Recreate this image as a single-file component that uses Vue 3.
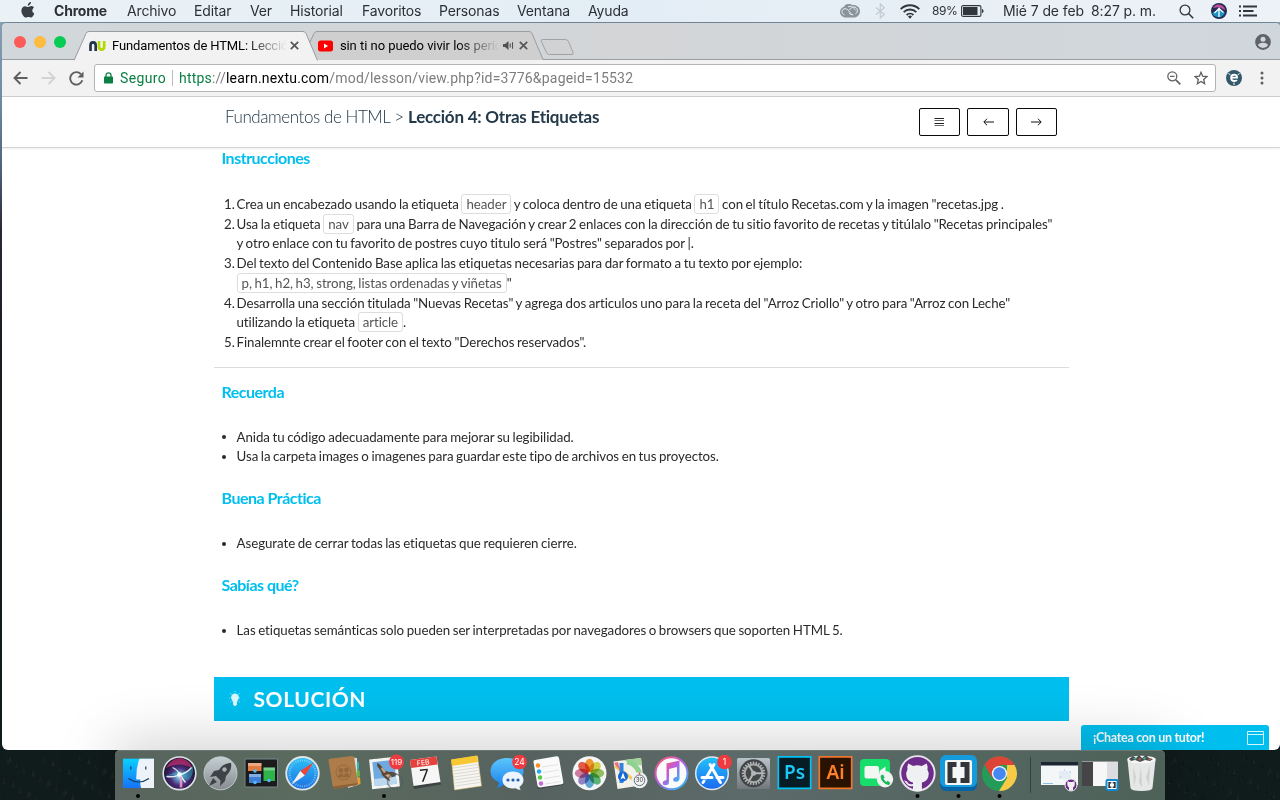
<script setup>
const menus = [
  { label: 'Archivo', cls: 'm1' },
  { label: 'Editar', cls: 'm2' },
  { label: 'Ver', cls: 'm3' },
  { label: 'Historial', cls: 'm4' },
  { label: 'Favoritos', cls: 'm5' },
  { label: 'Personas', cls: 'm6' },
  { label: 'Ventana', cls: 'm7' },
  { label: 'Ayuda', cls: 'm8' },
]
const petals = [
  '#f7941e', '#d9d43b', '#8cc152', '#4fb36b', '#4fa3d8', '#8e7cc3', '#d2739c', '#e8503a',
]
const safariTicks = Array.from({ length: 36 }, (_, i) => i * 10)
const gearTeeth = Array.from({ length: 24 }, (_, i) => i * 15)
const noteLines = [17, 20, 23, 26, 29, 32, 35]
const trees = Array.from({ length: 70 }, (_, i) => {
  const x = (i * 53) % 128
  const y = (i * 31) % 50
  return `M${x} ${y}l-2 8h4z`
})
</script>

<template>
  <div class="screen">
    <header class="menubar">
      <svg class="apple" width="14" height="17" viewBox="0 0 14 17"><path fill="#3a3f45" d="M9.900 0c.1 1-.3 1.900-.9 2.600-.6.700-1.500 1.200-2.300 1.100C6.600 2.800 7 1.900 7.600 1.200 8.200.5 9.200 0 9.900 0zM13 5.800c-1.100.7-1.700 1.500-1.700 2.800 0 1.400.8 2.500 2 3-.5 1.500-1.800 3.900-3.200 3.900-.9 0-1.400-.6-2.600-.6s-1.700.6-2.600.6C3 15.500.4 11.900.4 8.700.4 5.800 2.200 4.200 4.100 4.200c1.200 0 2.200.8 3 .8.7 0 2-.9 3.400-.9 1 0 1.900.6 2.500 1.700z"/></svg>
      <b class="app-name">Chrome</b>
      <span v-for="m in menus" :key="m.label" class="menu" :class="m.cls">{{ m.label }}</span>
      <div class="status">
        <svg class="cc" width="20" height="14" viewBox="0 0 20 14"><path fill="#8b939b" d="M7 0c2-.5 4-.1 5.400 1C16.600.6 20 3 20 7.200c0 3.500-2.800 6.300-6.400 6.300H5.800C2.500 13.500 0 11.100 0 8c0-2.600 1.700-4.700 4-5.300C4.700 1.300 5.700.4 7 0z"/><g fill="none" stroke="#e6edf4" stroke-width="1"><path d="M15.500 9.800c3-1.500 2.500-6.800-1.800-6.800-2 0-3 1.400-4.500 3.200M4.500 10.800c-3.700-1-3.200-6 .7-6.100 1.500 0 2.500.8 3.500 2.100l3.200 4M8 3c3-1.900 6.200.8 7.500 3.300M9 8.800c1 1.500 2.300 2.100 4.300 2"/></g></svg>
        <svg class="bt" width="11" height="16" viewBox="0 0 11 16"><path fill="none" stroke="#c3cad2" stroke-width="1.200" d="M1 4.500l8.300 6.800L5.300 15V1l4 3.700L1 11.500"/></svg>
        <svg class="wifi" width="20" height="15" viewBox="0 0 20 15"><g fill="none" stroke="#30363c" stroke-width="1.900"><path d="M.7 5.100a13.200 13.200 0 0 1 18.600 0M3.700 8.100a9 9 0 0 1 12.600 0M6.600 11a4.900 4.900 0 0 1 6.800 0"/></g><path fill="#30363c" d="M10 14.800l-2-2.200a2.800 2.800 0 0 1 4 0z"/></svg>
        <span class="pct">89%</span>
        <svg class="batt" width="24" height="12" viewBox="0 0 24 12"><rect x=".6" y=".6" width="19.300" height="10.800" rx="1.500" fill="none" stroke="#30363c" stroke-width="1.100"/><path fill="#30363c" d="M2 2h14.500v8H2zM21 4c2 0 2 4 0 4z"/></svg>
        <span class="date">Mié 7 de feb</span>
        <span class="clock">8:27 p. m.</span>
        <svg class="spot" width="15" height="15" viewBox="0 0 15 15"><circle cx="6" cy="6" r="4.900" fill="none" stroke="#30363c" stroke-width="1.300"/><path stroke="#30363c" stroke-width="1.600" d="M9.500 9.500l4.700 4.700"/></svg>
        <svg class="siri-s" width="16" height="16" viewBox="0 0 16 16"><circle cx="8" cy="8" r="8" fill="#232b50"/><path fill="#1b91c4" d="M1 10q5-2 7-5l6 5q-3 5-7 4-4 0-6-4z"/><path fill="#c44da1" d="M2 5q3-5 8-3 4 2 4 5L8 4z"/><path fill="none" stroke="#fff" stroke-width="1.300" d="M8 4.500V14M8 5.500l4.500 4M8 5.500L3.500 10"/></svg>
        <svg class="notif" width="18" height="12" viewBox="0 0 18 12"><path stroke="#30363c" stroke-width="1.900" d="M4 1.500h14M4 6h10.500M4 10.500h14M0 1.500h2M0 6h2M0 10.500h2"/></svg>
      </div>
    </header>

    <main class="window">
      <div class="tabstrip">
        <div class="lights"><i class="red"></i><i class="yellow"></i><i class="green"></i></div>
        <div class="tab active">
          <svg class="shape" width="245" height="30" viewBox="0 0 245 30"><path fill="#f2f2f2" stroke="#999ca0" d="M0 29.500L12 2.500Q12.800.5 15 .5h214q2 0 3 2L243.500 29.500"/><path stroke="#f2f2f2" stroke-width="2" d="M1 30h242"/></svg>
          <div class="tab-row">
            <svg width="17" height="12" viewBox="0 0 17 12"><path fill="none" stroke="#22364c" stroke-width="2.700" d="M1.500 11V5.500q0-3.100 2.600-3.100t2.600 3.100V11"/><path fill="none" stroke="#b4d800" stroke-width="2.700" d="M10 1v5.500q0 3.100 2.600 3.100t2.600-3.100V1"/></svg>
            <span class="tab-title t1">Fundamentos de HTML: Lecció</span>
            <svg class="close" width="9" height="9" viewBox="0 0 9 9"><path stroke="#565656" stroke-width="1.700" d="M.8.8l7.400 7.400M8.200.8L.8 8.200"/></svg>
          </div>
        </div>
        <div class="tab idle">
          <svg class="shape" width="241" height="30" viewBox="0 0 241 30"><path fill="#cfcfcf" stroke="#999ca0" d="M6 13L11 2.500Q12 .5 14 .5h212q2 0 3 2l11.500 27H14z"/></svg>
          <div class="tab-row">
            <svg width="15" height="12" viewBox="0 0 15 12"><rect width="15" height="11" y=".5" rx="2.500" fill="#f00"/><path fill="#fff" d="M6 3.500v5l4-2.500z"/></svg>
            <span class="tab-title t2">sin ti no puedo vivir los peric</span>
            <svg class="sound" width="11" height="9" viewBox="0 0 11 9"><path fill="#505050" d="M0 3h2l3.500-3v9L2 6H0z"/><path fill="none" stroke="#505050" stroke-width="1.100" d="M7.200 2.500v4M9.500 1.200v6.600"/></svg>
            <svg class="close" width="9" height="9" viewBox="0 0 9 9"><path stroke="#565656" stroke-width="1.700" d="M.8.8l7.400 7.400M8.200.8L.8 8.200"/></svg>
          </div>
        </div>
        <svg class="newtab" width="34" height="17" viewBox="0 0 34 17"><path fill="#d0d2d3" stroke="#9fa2a5" d="M2.500.5h23q2 0 3 2l4.500 11q.8 2-1 2H9.500q-2 0-3-2L1.300 2.500Q.5.5 2.500.5z"/></svg>
        <svg class="person" width="16" height="16" viewBox="0 0 16 16"><circle cx="8" cy="8" r="7.900" fill="#5f6368"/><circle cx="8" cy="5.300" r="2.500" fill="#d2d7db"/><path fill="#d2d7db" d="M3 11.300q.5-2.500 5-2.500t5 2.500Q11.500 14 8 14t-5-2.700z"/></svg>
      </div>

      <div class="toolbar">
        <svg width="15" height="14" viewBox="0 0 15 14"><path fill="none" stroke="#5f5f5f" stroke-width="1.900" d="M14.500 7H1.800M7.500 1L1.500 7l6 6"/></svg>
        <svg class="fwd" width="15" height="14" viewBox="0 0 15 14"><path fill="none" stroke="#d3d3d3" stroke-width="1.900" d="M.5 7h12.700M7.500 1l6 6-6 6"/></svg>
        <svg class="reload" width="15" height="15" viewBox="0 0 15 15"><path fill="none" stroke="#5f5f5f" stroke-width="1.900" d="M13.300 9.300A6.200 6.200 0 1 1 12 3.200"/><path fill="#5f5f5f" d="M14.500.5v6h-6z"/></svg>
        <div class="omnibox">
          <svg class="lock" width="9" height="12" viewBox="0 0 9 12"><rect y="4.500" width="9" height="7" rx=".8" fill="#0b8043"/><path fill="none" stroke="#0b8043" stroke-width="1.300" d="M2 5V3.300a2.500 2.500 0 0 1 5 0V5"/></svg>
          <span class="secure">Seguro</span><i class="bar"></i>
          <span class="url"><em>https</em>://<b>learn.nextu.com</b>/mod/lesson/view.php?id=3776&amp;pageid=15532</span>
          <svg class="zoomout" width="14" height="14" viewBox="0 0 14 14"><g fill="none" stroke="#666" stroke-width="1.300"><circle cx="5.300" cy="5.300" r="4.500"/><path d="M3 5.300h4.600"/><path stroke-width="1.800" d="M8.800 8.800l4.500 4.500"/></g></svg>
          <svg width="14" height="14" viewBox="0 0 14 14"><path fill="none" stroke="#5f5f5f" stroke-width="1.300" d="M7 1.300l1.600 3.900 4.300.4-3.200 2.900.9 4.200L7 10.500l-3.600 2.200.9-4.200L1.100 5.600l4.300-.4z"/></svg>
        </div>
        <svg class="ext" width="16" height="16" viewBox="0 0 16 16"><circle cx="8" cy="8" r="8" fill="#33586c"/><path fill="none" stroke="#fff" stroke-width="1.800" d="M5.500 7.700h5.600Q11 4.600 8.200 4.600 5.100 4.700 5.100 7.900q.1 3.100 3.200 3.100 1.600 0 2.700-.9"/><path stroke="#fff" d="M2.500 3.500l2 1.500M13.500 3.500l-2 1.500M8 12.500V15"/></svg>
        <svg class="dots" width="4" height="14" viewBox="0 0 4 14"><g fill="#5f5f5f"><circle cx="2" cy="2" r="1.500"/><circle cx="2" cy="7" r="1.500"/><circle cx="2" cy="12" r="1.500"/></g></svg>
      </div>

      <div class="page">
        <nav class="crumbs">
          <span class="course">Fundamentos de HTML &gt;</span>
          <b class="lesson">Lección 4: Otras Etiquetas</b>
          <div class="buttons">
            <button><svg width="11" height="10" viewBox="0 0 11 10"><path stroke="#222" d="M.5 1.500H10M.5 6.500H10"/><path stroke="#666" d="M.5 3.500H10M.5 8.500H10"/></svg></button>
            <button><svg width="11" height="8" viewBox="0 0 11 8"><path fill="none" stroke="#111" d="M11 4H1M4 .8L.8 4 4 7.200"/></svg></button>
            <button><svg width="11" height="8" viewBox="0 0 11 8"><path fill="none" stroke="#111" d="M0 4h10M7 .8L10.200 4 7 7.200"/></svg></button>
          </div>
        </nav>

        <article class="lesson-body">
          <section class="instructions">
            <h2>Instrucciones</h2>
            <ol>
              <li><i>1.</i><p>Crea un encabezado usando la etiqueta <code>header</code> y coloca dentro de una etiqueta <code>h1</code> con el título Recetas.com y la imagen "recetas.jpg .</p></li>
              <li><i>2.</i><p>Usa la etiqueta <code>nav</code> para una Barra de Navegación y crear 2 enlaces con la dirección de tu sitio favorito de recetas y titúlalo "Recetas principales"<br>y otro enlace con tu favorito de postres cuyo titulo será "Postres" separados por |.</p></li>
              <li><i>3.</i><p>Del texto del Contenido Base aplica las etiquetas necesarias para dar formato a tu texto por ejemplo:<br><code>p, h1, h2, h3, strong, listas ordenadas y viñetas</code>"</p></li>
              <li><i>4.</i><p>Desarrolla una sección titulada "Nuevas Recetas" y agrega dos articulos uno para la receta del "Arroz Criollo" y otro para "Arroz con Leche"<br>utilizando la etiqueta <code>article</code>.</p></li>
              <li><i>5.</i><p>Finalemnte crear el footer con el texto "Derechos reservados".</p></li>
            </ol>
          </section>
          <section class="notes">
            <h2>Recuerda</h2>
            <ul>
              <li>Anida tu código adecuadamente para mejorar su legibilidad.</li>
              <li>Usa la carpeta images o imagenes para guardar este tipo de archivos en tus proyectos.</li>
            </ul>
            <h2>Buena Práctica</h2>
            <ul><li>Asegurate de cerrar todas las etiquetas que requieren cierre.</li></ul>
            <h2>Sabías qué?</h2>
            <ul><li>Las etiquetas semánticas solo pueden ser interpretadas por navegadores o browsers que soporten HTML 5.</li></ul>
          </section>
          <div class="solution">
            <svg width="12" height="16" viewBox="0 0 12 16"><path fill="#d9f7ff" d="M6 2.500a3.900 3.900 0 0 1 3.900 4c0 2-1.600 2.700-1.900 5v2.200L6.500 15h-1L4 13.700v-2.200C3.700 9.200 2.100 8.500 2.100 6.500A3.900 3.900 0 0 1 6 2.500z"/><path stroke="#8ce6fa" stroke-dasharray="1 1" d="M6 0v2M1 2l2 2M11 2L9 4M0 7h2M10 7h2M1 11l2-1M11 11l-2-1"/></svg>
            <strong>SOLUCIÓN</strong>
          </div>
        </article>
      </div>

      <aside class="chat">
        <span>¡Chatea con un tutor!</span>
        <svg width="17" height="14" viewBox="0 0 17 14"><path fill="none" stroke="#d5f5fd" d="M.5.500h16v13H.5zM.5 3.500h16"/></svg>
      </aside>
    </main>

    <footer class="desktop">
      <svg class="forest left" width="128" height="50" viewBox="0 0 128 50"><path v-for="(d, i) in trees" :key="i" :d="d" :fill="i % 2 ? '#232d28' : '#111a18'" opacity=".6"/></svg>
      <div class="dock">
        <svg class="ico" viewBox="0 0 41 50"><defs><linearGradient id="fi" x2="0" y2="1"><stop stop-color="#0ad0ff"/><stop offset="1" stop-color="#1673fa"/></linearGradient></defs><path fill="url(#fi)" d="M5 8.700h31V38H5z"/><path fill="#eef3f9" d="M21.500 8.700H36V38H23q-1-4-.7-8.500h-4Q18 17 21.500 8.700z"/><path fill="none" stroke="#173a58" stroke-width="1.200" d="M12.800 16.500v3M27.800 16.500v3M10.500 28.500q10 7 20.500 0"/><circle class="run" cx="20" cy="46" r="2"/></svg>
        <svg class="ico" viewBox="0 0 41 50"><defs><radialGradient id="si" cy=".6"><stop stop-color="#bff"/><stop offset=".2" stop-color="#5fa5c8"/><stop offset=".55" stop-color="#4d2a78"/><stop offset="1" stop-color="#161530"/></radialGradient></defs><circle cx="20.500" cy="23.300" r="16.300" fill="url(#si)" stroke="#dde2e6" stroke-width="1.600"/><path fill="#e83480" opacity=".6" d="M7 18q5-10 15-10 10 3 11 10-12-7-26 0z"/><path fill="#23c7cb" opacity=".45" d="M6 27q8-5 14-4 10-1 14-8 1 12-6 16-3-6-8-7-7 1-14 3z"/><g fill="none" stroke="#fff" stroke-width="1.300" opacity=".85"><path d="M20.500 24.500q-4 3-13 2M20.500 24.500q7-1 12-7M20.500 24.500q-2-5-7-7M20.500 24.500l6 8"/><path stroke="#fb9ad8" stroke-width="2.500" d="M20.500 24.500q2 5 1.500 13"/></g><circle cx="20.500" cy="24.500" r="2.200" fill="#fff"/></svg>
        <svg class="ico" viewBox="0 0 41 50"><defs><linearGradient id="la" x2="0" y2="1"><stop stop-color="#c5d0d4"/><stop offset="1" stop-color="#868b8e"/></linearGradient></defs><circle cx="20.500" cy="23.300" r="16.500" fill="url(#la)" stroke="#bdc7cb"/><path fill="#3d4246" d="M31 13c-5 0-9 2-12 7l-5 1-4 6 6-1 4.500 4.500L20 36l5-5 1-5c4-4 6-8 5-13z"/><path fill="#3d4246" d="M13 28l-4 8 8-4z"/><circle cx="24.500" cy="19.500" r="2.200" fill="#a9b1b5"/></svg>
        <svg class="ico" viewBox="0 0 41 50"><path fill="#1b1b1c" stroke="#77868a" d="M4 9h32.500v28H4z"/><path fill="#e07b41" d="M7 13h13.500v8H7z"/><path fill="#3d7fd6" d="M8 24h12v9H8z"/><path fill="#2fb44a" d="M22.500 17.500H34V31H22.500z"/><path fill="#fff" opacity=".35" d="M7 13h13.500v3H7zM8 24h12v3H8zM22.500 17.500H34v3H22.500z"/><g fill="#52b6fb"><circle cx="14" cy="21" r="1.800"/><circle cx="14" cy="32.500" r="1.800"/><circle cx="28" cy="30.500" r="1.800"/></g></svg>
        <svg class="ico" viewBox="0 0 41 50"><defs><linearGradient id="sa" x2="0" y2="1"><stop stop-color="#2cc3f7"/><stop offset="1" stop-color="#1c6fe0"/></linearGradient></defs><circle cx="20.500" cy="23.300" r="16.300" fill="url(#sa)" stroke="#dfe4e6" stroke-width="1.800"/><path v-for="a in safariTicks" :key="a" stroke="#b7e2fa" stroke-width=".6" d="M20.500 9.300v2" :transform="`rotate(${a} 20.500 23.300)`"/><path fill="#f34335" d="M31.500 12.500L18.300 21l4.500 4.500z"/><path fill="#f2f2f2" d="M9.500 34.500L18.300 21l4.500 4.500z"/></svg>
        <svg class="ico" viewBox="0 0 41 50"><path fill="#d9dde0" d="M25 7l9 1 1 27-10 3z"/><path fill="#36b5b0" d="M34 12l2 .2v7l-2 .3z"/><path fill="#65b94b" d="M34 20l2.500.2.5 6-3 .5z"/><path fill="#e8a030" d="M34.500 28l2.500-1 .5 7-3 1z"/><path fill="#ad7c49" d="M5.500 10.500Q5 9 7 8.700L29 6q2 0 2.300 2L35 33q0 2-1.500 2.300L13 38.500q-3 .3-3.300-2z"/><path fill="#8d6035" d="M9.700 36.500l25-3.500q0 2-1.500 2.300L13 38.500q-3 .3-3.300-2z"/><circle cx="20.500" cy="22.500" r="7.500" fill="none" stroke="#8b6239" opacity=".7"/><g fill="#8b6239" opacity=".75"><circle cx="18" cy="20.500" r="2.400"/><circle cx="23.500" cy="20" r="2.400"/><path d="M14.500 27.500q1-4 3.500-4t3 4zM21 27.500q0-4.500 2.500-4.500t3.500 4z"/></g></svg>
        <svg class="ico" viewBox="0 0 41 50"><g transform="rotate(-6 20 23)"><path fill="#6ea9e0" stroke="#f4f4f1" stroke-width="3" d="M8 9.500h25v27H8z"/><path fill="none" stroke="#606a68" stroke-dasharray="1 1.500" d="M6 7.500h29v31H6z"/><path fill="#bcd8ee" d="M9.500 28H31.500v7H9.500z"/></g><path fill="#5b4638" d="M13.500 13q4 2 7 7.500l4.500 1.500q3-1 8 2-3 3.500-8 3.500l1 4-4-2.500-4-4q-.5-3.500-3-6.500-3-3-1.500-5.500z"/><path fill="#c5a984" d="M18 17l4 5-2 1-3-4zM21 25l4-1 3 3-3 1.500z"/><circle cx="31" cy="31.500" r="7.500" fill="none" stroke="#505d60" stroke-width="1.500" opacity=".6"/><circle class="badge" cx="32.500" cy="12" r="7.500"/><text class="badge-t" x="32.500" y="14.900">119</text><circle class="run" cx="20" cy="46" r="2"/></svg>
        <svg class="ico" viewBox="0 0 41 50"><path fill="#3d4245" d="M8 34l27-3 1 3.500L9 39z"/><path fill="#f6f6f6" d="M5 10l26.500-3.500 4 25.500L8.500 36z"/><path fill="#e8413c" d="M5 10l26.500-3.500 1 8L6.200 18z"/><text x="18.500" y="15" transform="rotate(-6 18.500 15)" class="mini" fill="#fff" font-size="7">FEB</text><text x="20" y="31.500" transform="rotate(-6 20 31)" class="mini" fill="#222" font-size="17">7</text></svg>
        <svg class="ico" viewBox="0 0 41 50"><path fill="#f7f5f0" stroke="#d6b75d" stroke-width=".5" d="M5.500 10L31.500 6l4 30-27 4z"/><path fill="#f7c831" d="M5 9.500L31 5.500l1 6.500L6 16z"/><path v-for="y in noteLines" :key="y" stroke="#d4d2cd" stroke-width=".8" :d="`M${(y * 0.14 + 4.5).toFixed(1)} ${y + 1}l26-3.800`"/></svg>
        <svg class="ico" viewBox="0 0 41 50"><defs><linearGradient id="me" x2="0" y2="1"><stop stop-color="#5cc6fb"/><stop offset="1" stop-color="#1a80ef"/></linearGradient></defs><path fill="url(#me)" d="M20 8c9.500 0 16.500 5.500 16.500 13S29.500 34.500 20 34.500l-3-.2Q13 38 9 38q3-2 3-5.500Q3.500 28.500 3.500 21C3.500 13.500 10.500 8 20 8z"/><path fill="#edf4fb" d="M26 21.500c6 0 10.500 3.500 10.500 8.500 0 3-1.500 5-4 6.800 0 1 .5 2.300 1.500 3-2 0-4-.7-5-1.600l-3 .3c-6 0-10.500-3.500-10.500-8.500s4.500-8.500 10.500-8.500z"/><g fill="#1f5fae"><circle cx="21" cy="30" r="1.600"/><circle cx="26" cy="30" r="1.600"/><circle cx="31" cy="30" r="1.600"/></g><circle class="badge" cx="32.500" cy="12" r="7.300"/><text class="badge-t two" x="32.500" y="14.900">24</text></svg>
        <svg class="ico" viewBox="0 0 41 50"><path fill="#3f4543" d="M9 36l26-4 .5 3L10 39z"/><path fill="#fafafa" d="M7 10l21.500-3.700q2-.3 2.500 1.700l4.300 24q.2 2-1.500 2.300L12 37.500q-2 .2-2.500-1.700L5.500 12q-.2-1.800 1.500-2z"/><g><circle cx="10" cy="15.500" r="2.200" fill="#fb8c24"/><circle cx="11" cy="21.500" r="2.200" fill="#20aaf0"/><circle cx="12" cy="27.500" r="2.200" fill="#56cc45"/><circle cx="13" cy="33.500" r="2.200" fill="#c668d8"/></g><path stroke="#d8d8d8" stroke-width=".7" d="M14 17l16-2.500M15 22.500l16-2.500M16 28.500l16-2.500M17 34l16-2.500"/></svg>
        <svg class="ico" viewBox="0 0 41 50"><circle cx="20.500" cy="23.300" r="17" fill="#f5f5f5"/><ellipse v-for="(c, i) in petals" :key="c" cx="20.500" cy="15.500" rx="4.600" ry="6.800" :fill="c" class="petal" :transform="`rotate(${i * 45} 20.500 23.300)`"/></svg>
        <svg class="ico" viewBox="0 0 41 50"><path fill="#f4f1e8" d="M3.500 11.500L31 8l3 27-26.500 4z"/><path fill="#9fd39a" d="M14 10l17-2 1 7q-9 1-18-5z"/><path fill="none" stroke="#8fd190" stroke-width="5" d="M17 12q12 2 14 18"/><path fill="none" stroke="#f2cb57" stroke-width="3" d="M5 16l23 17"/><path fill="#ee6d84" d="M4 13l4-1 2 8-4-4z"/><path fill="#2f84e0" d="M9.500 13h4v20h-4z"/><circle cx="13" cy="26.500" r="5" fill="#1667d9"/><path fill="#fff" d="M13 22.500l2.500 7-2.500-1.500-2.500 1.500z"/><circle cx="29.500" cy="30.300" r="8" fill="#f0f1f2"/><circle cx="29.500" cy="30.300" r="5.300" fill="none" stroke="#62717e"/><text class="mini" x="29.500" y="32.300" font-size="5.500" fill="#333">30</text><path stroke="#e54848" stroke-width="1.500" d="M29.500 22.500v2"/></svg>
        <svg class="ico" viewBox="0 0 41 50"><defs><linearGradient id="it" x2=".8" y2="1"><stop stop-color="#fb5a6a"/><stop offset=".5" stop-color="#bd5be0"/><stop offset="1" stop-color="#32b8f5"/></linearGradient></defs><circle cx="20.500" cy="23.300" r="16" fill="#fafafa" stroke="url(#it)" stroke-width="2"/><path fill="url(#it)" d="M15.500 13.500l13-3v18q0 3-3.300 3.300t-3-2.500q.3-2 3.800-2.500V17l-8 2v13q0 3-3.300 3.200t-3-2.500q.3-2 3.800-2.700z"/></svg>
        <svg class="ico" viewBox="0 0 41 50"><defs><linearGradient id="as" x2="0" y2="1"><stop stop-color="#21c3fb"/><stop offset="1" stop-color="#1b68ef"/></linearGradient></defs><circle cx="20" cy="23.300" r="16.300" fill="url(#as)" stroke="#dfe6ea" stroke-width="1.500"/><path fill="none" stroke="#fff" stroke-width="3" stroke-linecap="round" d="M18 14.500l10.500 18M22 14.500l-8 13.500M12 31l-1 1.500M10 27.500h10M25 27.500h6"/><circle class="badge" cx="32.500" cy="12" r="7.300"/><text class="badge-t two" x="32.500" y="14.900">1</text></svg>
        <svg class="ico" viewBox="0 0 41 50"><defs><linearGradient id="pr" x2="0" y2="1"><stop stop-color="#b8c3c9"/><stop offset="1" stop-color="#71777a"/></linearGradient></defs><rect x="4" y="8" width="33" height="31" rx="1.500" fill="url(#pr)"/><circle cx="20.500" cy="23.300" r="14" fill="#414547"/><path v-for="a in gearTeeth" :key="a" stroke="#b3b7b8" stroke-width="1.500" d="M20.500 11.500v3" :transform="`rotate(${a} 20.500 23.300)`"/><circle cx="20.500" cy="23.300" r="8.900" fill="#454849" stroke="#a7abac" stroke-width="2"/><path stroke="#b3b7b8" stroke-width="2" d="M20.500 23.300h9M20.500 23.300L16 15.500M20.500 23.300L16 31"/><circle cx="20.500" cy="23.300" r="2.500" fill="#b3b7b8"/></svg>
        <svg class="ico" viewBox="0 0 41 50"><path fill="#071d26" stroke="#00c4f4" stroke-width="1.700" d="M4.300 6.800h32.400v31.500H4.300z"/><text class="adobe" x="20.500" y="29" fill="#19c8f5">Ps</text></svg>
        <svg class="ico" viewBox="0 0 41 50"><path fill="#291300" stroke="#ef762b" stroke-width="1.700" d="M4.300 6.800h32.400v31.500H4.300z"/><text class="adobe" x="20.500" y="29" fill="#ff7f2a">Ai</text></svg>
        <svg class="ico" viewBox="0 0 41 50"><rect x="4" y="9" width="30" height="27" rx="4" fill="#17dd6b"/><rect x="8.500" y="16" width="14.500" height="12.500" rx="2" fill="#f2f7f4"/><path fill="#f2f7f4" d="M23.500 21l6-4.500v11.500l-6-4z"/><circle cx="29" cy="29.300" r="8.200" fill="#f1f3f2"/><path fill="#18b957" d="M24.800 25.500l2.200-1 1.700 3-1.300 1q1 2.300 3 3.400l1.200-1.200 2.700 2-1.200 2.200q-3 .6-6-2.800-3-3.500-2.300-6.600z"/></svg>
        <svg class="ico" viewBox="0 0 41 50"><circle cx="20.500" cy="23.300" r="17.200" fill="#6d2c89" stroke="#e9e2ec" stroke-width="1.900"/><path fill="#eef0f1" d="M11.200 13.500l5 2.400q4-1.200 8.500 0l5-2.400q1.300 3 .7 6 2 3 1 7-1.500 5.200-6.500 6v8.200q-4.500 1.400-8.900 0V36q-5 1-7.500-3.500l-1.500-2q3-.2 4.500 3 2 1.300 4.500.4v-1.500q-5-1-6.500-6-1-4 1-7-.5-3 .7-6z"/><circle class="run" cx="20.500" cy="46" r="2"/></svg>
        <svg class="ico" viewBox="0 0 41 50"><rect x="2" y="6" width="37" height="35" rx="6" fill="#0863a5"/><rect x="2" y="5" width="37" height="32" rx="6" fill="#159bdc"/><rect x="7" y="10" width="27" height="25" rx="2" fill="#f5f6f6"/><path fill="#32363a" d="M9.500 12h9v5h-4v11h4v5h-9zM22.500 12h9v21h-9v-5h4V17h-4z"/><circle class="run" cx="20.500" cy="46" r="2"/></svg>
        <svg class="ico" viewBox="0 0 41 50"><circle cx="20.500" cy="23.600" r="17.400" fill="#249b59"/><path fill="#dc4437" d="M5.400 15A17.400 17.400 0 0 1 35.600 15H20.500l-7.400 13z"/><path fill="#f8ca45" d="M35.600 15A17.400 17.400 0 0 1 20 41l8-13V15z"/><path fill="#249b59" d="M5.400 15L13 28.300q3 5 8 4.200L17 40.700A17.400 17.400 0 0 1 5.400 15z"/><circle cx="20.500" cy="23.600" r="7.700" fill="#f3f3f3"/><circle cx="20.500" cy="23.600" r="6.300" fill="#4587f3"/><circle class="run" cx="20.500" cy="46" r="2"/></svg>
        <i class="divider"></i>
        <svg class="ico" viewBox="0 0 41 50"><path fill="#f4f7f8" d="M2 13h37v22H2z"/><path fill="#1c2532" d="M2 12h37v3.500H2z"/><path fill="#e4edf3" d="M20 21h12v8H20z"/><path stroke="#75aee1" stroke-width=".8" d="M4 33.500h10M25 20h1M31 22h1M21 27h1"/><circle cx="32" cy="35" r="6" fill="#6d2c89" stroke="#eee"/><path fill="#f1f1f1" d="M28.500 31l2 1h3l2-1q1 5-1.500 6.500v3h-4v-3q-2.500-1.500-1.500-6.500z"/></svg>
        <svg class="ico" viewBox="0 0 41 50"><path fill="#454447" d="M2 11.500h36V36H2z"/><path fill="#f7f7f7" d="M13 12h14v24H13z"/><path fill="#dcdde1" d="M27 12h11v24H27z"/><path stroke="#999" d="M2 11.500h36"/><rect x="25.500" y="29" width="13" height="12" rx="2" fill="#1588cc"/><path fill="#fff" d="M27.500 31h9v8h-9z"/><path fill="#30363a" d="M28.300 32h3v1.500H30v3h1.300V38h-3zM32.700 32h3v6h-3v-1.500H34v-3h-1.300z"/></svg>
        <svg class="ico" viewBox="0 0 41 50"><path fill="#e6e7e7" d="M6.500 10L9.500 38Q10 41 20.500 41T31.500 38L34.500 10z"/><path fill="#b9bcbc" d="M12 17l3 10-2 10M20 16l-2 16 3 6M29 15l-4 12 3 9" opacity=".5"/><ellipse cx="20.500" cy="9.500" rx="14.300" ry="3.800" fill="#f7f7f7"/><path fill="#4a4d4a" d="M8 9l4-3 3 2 3-3 3 3 4-3 3 3 4 1-3 2-5-1-5 2-5-2-4 1z"/><path fill="#4aa7a1" d="M12 8l2 2 2-2zM21 8l3 2 1-3z"/><path fill="#c45d50" d="M17 9l2 2 1-3zM27 10l2-2 1 2z"/></svg>
      </div>
      <svg class="forest" width="128" height="50" viewBox="0 0 128 50"><path v-for="(d, i) in trees" :key="i" :d="d" :fill="i % 2 ? '#182725' : '#0b1718'" opacity=".8"/></svg>
    </footer>
  </div>
</template>

<style>
html, body { margin: 0; background: #141f20; }
</style>

<style scoped>
* { box-sizing: border-box; }
svg { display: block; flex: none; }
i, em { font-style: normal; }
.screen { width: 1280px; height: 800px; overflow: hidden; display: flex; flex-direction: column; background: linear-gradient(#8ba5b8 0, #6f8ba3 100px, #4d617d 170px, #2b2635 230px, #191e24 330px, #161c20 500px, #0e1a1c 800px); }

.menubar { height: 22px; flex: none; display: flex; align-items: center; background: linear-gradient(90deg, #eaf2f6, #e3edf5 50%, #edf2f7); font: 14px/22px Inter, sans-serif; color: #2b3036; white-space: nowrap; }
.apple { margin: 0 19px 1px 21px; }
.app-name { width: 73px; font-weight: 700; letter-spacing: -.2px; }
.menu { flex: none; letter-spacing: -.15px; }
.m1 { width: 67px; } .m2 { width: 56px; } .m3 { width: 40px; } .m4 { width: 72px; }
.m5 { width: 77px; } .m6 { width: 78px; } .m7 { width: 71px; } .m8 { width: 60px; }
.status { flex: 1; display: flex; align-items: center; }
.cc { margin-left: 192px; }
.bt { margin-left: 15px; }
.wifi { margin-left: 14px; }
.pct { margin-left: 12px; width: 29px; font-size: 12px; letter-spacing: -.4px; }
.batt { width: 24px; }
.date { margin-left: 18px; width: 88px; letter-spacing: -.1px; }
.clock { width: 88px; letter-spacing: -.1px; }
.siri-s { margin-left: 17px; }
.notif { margin-left: 12px; }

.window { position: relative; height: 728px; flex: none; margin: 0 0 0 2px; display: flex; flex-direction: column; background: #fff; border-radius: 5px 5px 6px 6px; overflow: hidden; border-top: 1px solid #6f8496; }
.tabstrip { height: 37px; flex: none; display: flex; align-items: flex-start; background: linear-gradient(90deg, #d1d7da, #d3d5d7 50%, #d0d7dc); box-shadow: inset 0 -1px #999ca0; font: 12px/28px Roboto, sans-serif; color: #000; }
.lights { display: flex; gap: 8px; padding: 13px 0 0 12px; width: 72px; flex: none; }
.lights i { width: 12px; height: 12px; border-radius: 50%; }
.red { background: #fc5b57; } .yellow { background: #fdbc40; } .green { background: #06cb55; }
.tab { display: grid; flex: none; margin-top: 8px; }
.tab > * { grid-area: 1 / 1; }
.active { width: 245px; z-index: 2; }
.idle { width: 241px; margin-left: -16px; }
.tab-row { display: flex; align-items: center; height: 29px; padding-left: 15px; z-index: 1; }
.tab-title { white-space: nowrap; font-size: 13px; -webkit-mask-image: linear-gradient(90deg, #000 calc(100% - 42px), transparent); mask-image: linear-gradient(90deg, #000 calc(100% - 42px), transparent); }
.t1 { margin-left: 6px; width: 175px; letter-spacing: -.13px; }
.t2 { margin-left: 7px; width: 159px; letter-spacing: -.13px; word-spacing: .3px; }
.close { margin-left: 3px; }
.sound { margin-left: 4px; }
.sound + .close { margin-left: 5px; }
.newtab { margin: 16px 0 0 -4px; }
.person { margin: 11px 9px 0 auto; }

.toolbar { height: 37px; flex: none; display: flex; align-items: center; padding-left: 11px; background: #f2f2f2; border-bottom: 1px solid #cacaca; }
.fwd { margin-left: 13px; }
.reload { margin-left: 13px; }
.omnibox { margin-left: 10px; width: 1122px; height: 28px; border: 1px solid #b4b4b4; border-radius: 3px; background: #fff; display: flex; align-items: center; font: 14px/26px Roboto, sans-serif; color: #7d7d7d; }
.lock { margin-left: 9px; }
.secure { margin-left: 7px; width: 52px; color: #0b8043; letter-spacing: .35px; }
.bar { width: 1px; height: 16px; background: #bbb; margin-right: 6px; }
.url { flex: 1; letter-spacing: .2px; white-space: nowrap; }
.url em { color: #0b8043; }
.url b { font-weight: 400; color: #000; }
.zoomout { margin-right: 13px; }
.omnibox svg:last-child { margin-right: 7px; }
.ext { margin-left: 10px; }
.dots { margin-left: 18px; }

.page { flex: 1; font-family: Lato, sans-serif; color: #2a2a2a; }
.crumbs { height: 51px; display: flex; align-items: flex-start; padding: 10px 0 0 223px; border-bottom: 1px solid #d4d4d4; box-shadow: 0 1px 2px #eee; color: #24394a; font-size: 17px; line-height: 20px; white-space: nowrap; }
.course { font-weight: 300; width: 183px; letter-spacing: -.43px; }
.lesson { width: 511px; letter-spacing: -.23px; }
.buttons { display: flex; gap: 7px; padding-top: 1px; }
.buttons button { width: 42px; height: 28px; padding: 0; border: 1px solid #0a0a0a; border-radius: 2px; background: #fff; display: grid; place-items: center; }
.buttons button:first-child { width: 41px; }
.buttons button:last-child { width: 41px; }

.lesson-body { width: 855px; margin-left: 212px; font-size: 13.300px; line-height: 19.700px; letter-spacing: -.07px; word-spacing: -.7px; white-space: nowrap; }
h2 { margin: 0; padding-left: 7.500px; height: 20px; font-size: 16px; line-height: 20px; font-weight: 700; letter-spacing: -.5px; word-spacing: 0; color: #00bfee; }
ol, ul { list-style: none; margin: 0; padding: 0; }
p { margin: 0; }
.instructions { height: 220px; border-bottom: 1px solid #dcdcdc; }
ol { padding: 27px 0 0 10px; }
ol li { display: flex; }
ol i { width: 12.500px; flex: none; }
code { font: inherit; color: #555; border: 1px solid #ddd; border-radius: 3px; padding: 1px 4px; }
.notes { padding-top: 14px; height: 309px; }
ul { padding: 25.600px 0 21.400px 8px; }
ul li { display: flex; align-items: center; gap: 10.600px; }
ul li::before { content: ''; width: 4px; height: 4px; border-radius: 50%; background: #2a2a2a; }
.solution { height: 44px; background: #00bfee; display: flex; align-items: center; padding-left: 15px; color: #fff; }
.solution strong { margin-left: 12.500px; font-size: 21px; line-height: 44px; letter-spacing: .6px; }
.chat { position: absolute; right: 11px; bottom: 0; width: 188px; height: 25px; border-radius: 3px 3px 0 0; background: #00bfee; display: flex; align-items: center; justify-content: space-between; padding: 0 5px 0 12px; color: #fff; font: 700 12.500px/25px Lato, sans-serif; letter-spacing: -.3px; }

.desktop { height: 50px; flex: none; display: flex; background: #101b1b; }
.forest { width: 115px; height: 50px; }
.dock { position: relative; width: 1050px; height: 50px; flex: none; display: flex; align-items: flex-start; padding: 0 3px; background: linear-gradient(90deg, #58645e, #5b6b5e 18%, #56625f 40%, #5c6a69 60%, #4e6259); border-radius: 5px 5px 0 0; box-shadow: inset 0 1px #6b7673, 0 -4px 60px rgba(0, 0, 0, .22); }
.ico { width: 41px; height: 50px; overflow: visible; }
.divider { width: 1px; height: 36px; margin: 7px 8px 0 10px; background: #354340; }
.run { fill: #050505; }
.badge { fill: #ef3b40; }
.badge-t { fill: #fff; font: 8px Inter, sans-serif; text-anchor: middle; }
.badge-t.two { font-size: 8.500px; }
.mini { font-family: Inter, sans-serif; text-anchor: middle; }
.adobe { font: 600 19px "Noto Sans", sans-serif; text-anchor: middle; }
.petal { mix-blend-mode: multiply; opacity: .9; }
</style>
